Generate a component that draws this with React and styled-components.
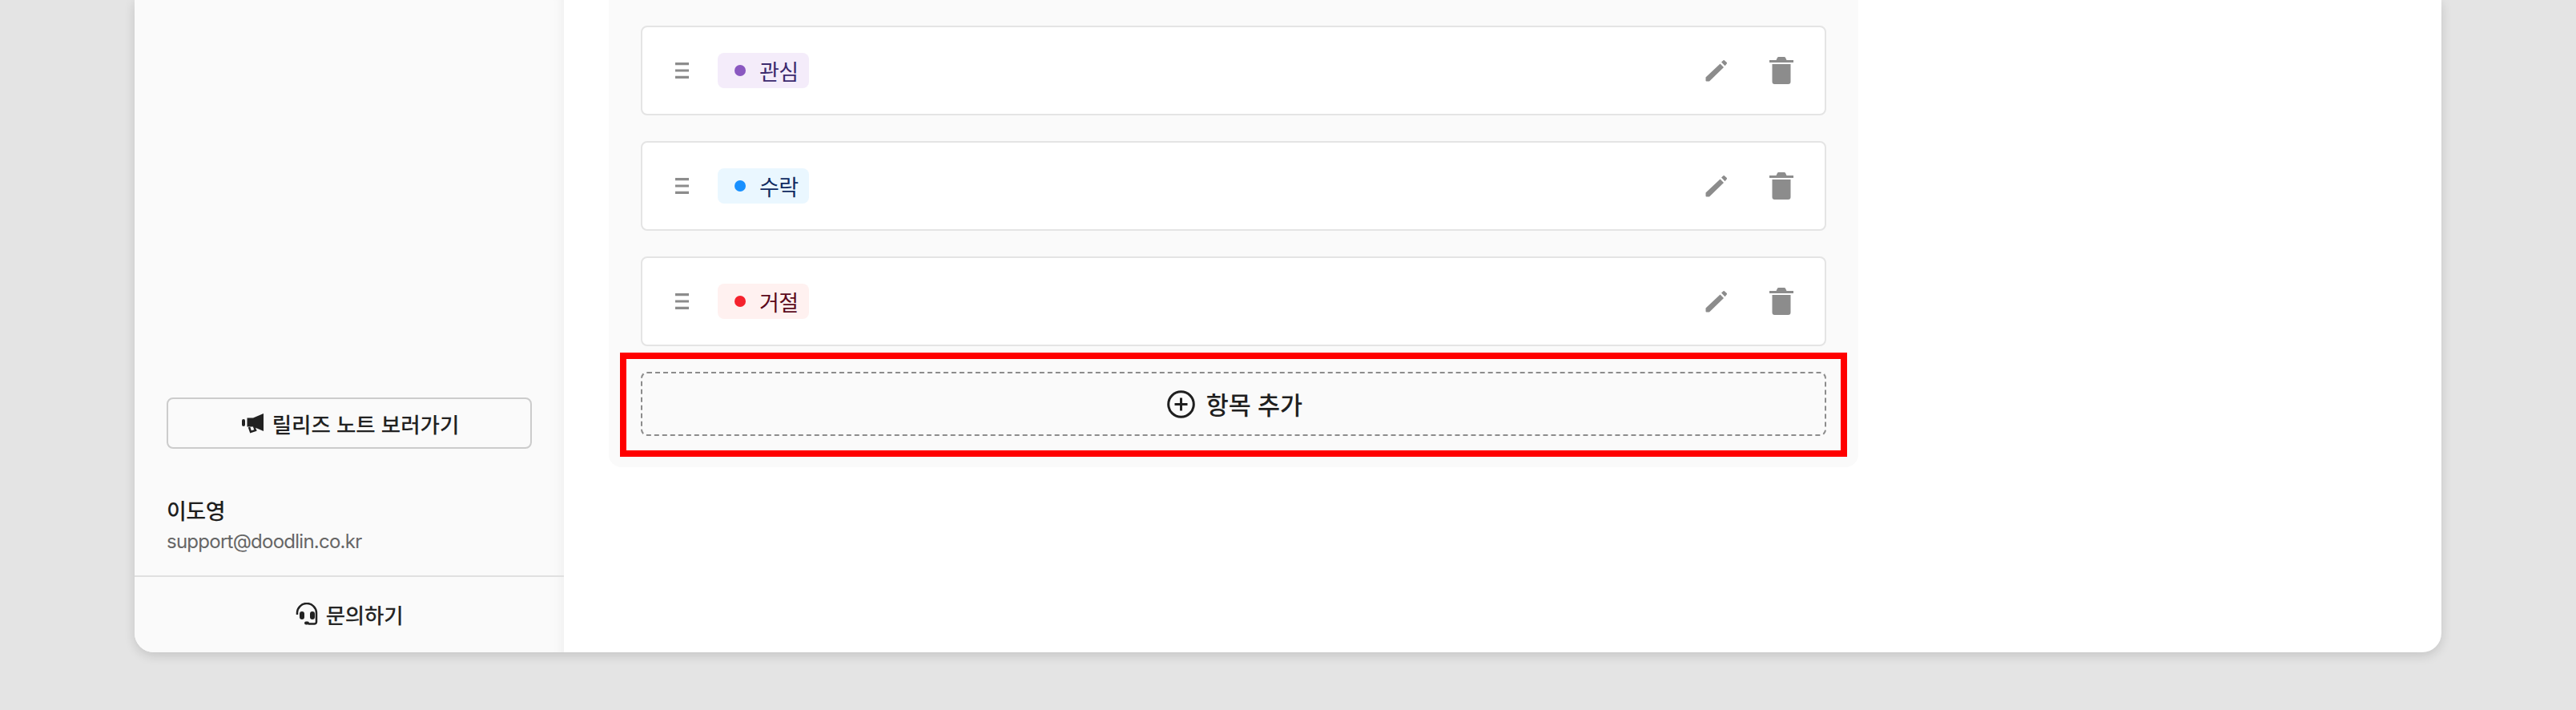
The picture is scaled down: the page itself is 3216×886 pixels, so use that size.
import React from 'react';
import styled, { createGlobalStyle } from 'styled-components';

const Global = createGlobalStyle`
  html, body { margin: 0; padding: 0; height: 886px; overflow: hidden; background: #e4e4e4; }
  body { font-family: Inter, "Noto Sans CJK KR", sans-serif; }
  * { box-sizing: border-box; }
`;

const Page = styled.div`
  height: 886px;
  padding: 0 168px 72px;
  display: flex;
`;
const Card = styled.div`
  flex: 1;
  display: flex;
  background: #fff;
  border-radius: 0 0 24px 24px;
  box-shadow: 0 4px 14px rgba(0,0,0,.14);
  overflow: hidden;
`;
const Sidebar = styled.aside`
  width: 536px;
  flex: none;
  background: #fafafa;
  display: flex;
  flex-direction: column;
  justify-content: flex-end;
  box-shadow: inset -14px 0 14px -12px rgba(0,0,0,.05);
`;
const SideTop = styled.div`
  padding: 0 40px 24px;
`;
const ReleaseButton = styled.button`
  width: 100%;
  height: 64px;
  background: transparent;
  border: 2px solid #ccc;
  border-radius: 8px;
  display: flex;
  align-items: center;
  justify-content: center;
  gap: 10px;
  font: 500 26.5px Inter, "Noto Sans CJK KR", sans-serif;
  color: #222;
  padding: 0 0 0 3px;
`;
const Name = styled.div`
  margin-top: 59px;
  font-weight: 500;
  font-size: 27px;
  letter-spacing: -0.5px;
  line-height: 39px;
  color: #1f1f1f;
`;
const Email = styled.div`
  font-size: 24px;
  letter-spacing: -0.75px;
  line-height: 36px;
  color: #666;
`;
const Inquiry = styled.div`
  height: 96px;
  border-top: 2px solid #e0e0e0;
  display: flex;
  align-items: center;
  justify-content: center;
  gap: 10px;
  padding-bottom: 2px;
  font-weight: 500;
  font-size: 26.5px;
  letter-spacing: -0.2px;
  color: #262626;
`;
const Main = styled.main`
  flex: 1;
  padding-left: 56px;
`;
const Panel = styled.section`
  width: 1560px;
  background: #fafafa;
  border-radius: 0 0 16px 16px;
  padding: 32px 40px 39px;
  display: flex;
  flex-direction: column;
  gap: 32px;
`;
const Item = styled.div`
  height: 112px;
  background: #fff;
  border: 2px solid #e4e4e4;
  border-radius: 8px;
  display: flex;
  align-items: center;
  padding: 0 39px 0 41px;
`;
const Handle = styled.svg`
  width: 18px;
  height: 20px;
  flex: none;
  margin-right: 35px;
`;
const Tag = styled.span`
  width: 114px;
  height: 44px;
  border-radius: 8px;
  background: ${p => p.$bg};
  color: ${p => p.$fg};
  display: flex;
  align-items: center;
  padding-left: 21px;
  gap: 17px;
  font-size: 27px;
  letter-spacing: -0.5px;
`;
const Dot = styled.i`
  width: 14px;
  height: 14px;
  border-radius: 50%;
  background: ${p => p.$c};
  flex: none;
`;
const Actions = styled.div`
  margin-left: auto;
  display: flex;
  align-items: center;
  gap: 52px;
`;
const AddWrap = styled.div`
  position: relative;
`;
const AddButton = styled.button`
  width: 100%;
  height: 80px;
  background: #fafafa;
  border: 2px dashed #8c8c8c;
  border-radius: 8px;
  display: flex;
  align-items: center;
  justify-content: center;
  gap: 14px;
  font: 500 30.5px Inter, "Noto Sans CJK KR", sans-serif;
  color: #1f1f1f;
  padding: 0 0 0 3px;
`;
const Highlight = styled.div`
  position: absolute;
  inset: -24px -26px -26px -26px;
  border: 8px solid #f00;
  pointer-events: none;
`;

const HandleIcon = () => (
  <Handle viewBox="0 0 18 20"><path fill="#8c8c8c" d="M0 0h17v3.200H0zM0 8.400h17v3.200H0zM0 16.800h17v3.200H0z"/></Handle>
);
const Pencil = () => (
  <svg width="28" height="28" viewBox="0 0 28 28" style={{ display: 'block' }}>
    <path fill="#8c8c8c" d="M0.500 22.500 18.500 5.500 23 10 5 27.500H1.500a1 1 0 0 1-1-1z"/>
    <path fill="#8c8c8c" d="M20 3.500 22.500 1.200a1 1 0 0 1 1.300 0l3 2.900a1 1 0 0 1 0 1.300L24.500 8.200z"/>
  </svg>
);
const Trash = () => (
  <svg width="30" height="34" viewBox="0 0 30 34" style={{ display: 'block' }}>
    <path fill="#8c8c8c" d="M0 4h8.500l1.300-2.800a2 2 0 0 1 1.700-1.200h7a2 2 0 0 1 1.700 1.200L21.500 4H30v3H0z"/>
    <path fill="#8c8c8c" d="M3.500 9h23v22a3 3 0 0 1-3 3h-17a3 3 0 0 1-3-3z"/>
  </svg>
);
const Megaphone = () => (
  <svg width="28" height="26" viewBox="0 0 28 26">
    <path fill="#222" d="M27 1v22L14 17.500H6.500V6.500H14z"/>
    <rect x="0" y="8" width="4" height="9" rx="2" fill="#222"/>
    <path fill="none" stroke="#222" strokeWidth="2.500" d="M9 18l2 6 6-2-2-5"/>
  </svg>
);
const Headset = () => (
  <svg width="28" height="28" viewBox="0 0 28 28" fill="none">
    <path stroke="#222" strokeWidth="2.500" d="M2 15v-2a12 12 0 0 1 24 0v11a2.500 2.500 0 0 1-2.500 2.500H16"/>
    <rect x="5" y="11" width="6" height="10" rx="3" fill="#222"/>
    <rect x="18" y="11" width="6" height="10" rx="3" fill="#222"/>
    <rect x="11" y="23.500" width="6" height="4" rx="2" fill="#222"/>
  </svg>
);
const PlusCircle = () => (
  <svg width="35" height="35" viewBox="0 0 35 35" fill="none" stroke="#1f1f1f" strokeWidth="3">
    <circle cx="17.500" cy="17.500" r="15.800"/>
    <path d="M17.500 9.500v16M9.500 17.500h16"/>
  </svg>
);

const items = [
  { label: '관심', bg: '#f4ecfa', fg: '#3c2a6e', dot: '#8a58c0' },
  { label: '수락', bg: '#eaf7ff', fg: '#0f2a60', dot: '#1890ff' },
  { label: '거절', bg: '#fff1f0', fg: '#5c0a1c', dot: '#f5222d' },
];

export default function App() {
  return (
    <Page>
      <Global />
      <Card>
        <Sidebar>
          <SideTop>
            <ReleaseButton><Megaphone />릴리즈 노트 보러가기</ReleaseButton>
            <Name>이도영</Name>
            <Email>support@doodlin.co.kr</Email>
          </SideTop>
          <Inquiry><Headset />문의하기</Inquiry>
        </Sidebar>
        <Main>
          <Panel>
            {items.map(it => (
              <Item key={it.label}>
                <HandleIcon />
                <Tag $bg={it.bg} $fg={it.fg}><Dot $c={it.dot} />{it.label}</Tag>
                <Actions><Pencil /><Trash /></Actions>
              </Item>
            ))}
            <AddWrap>
              <AddButton><PlusCircle />항목 추가</AddButton>
              <Highlight />
            </AddWrap>
          </Panel>
        </Main>
      </Card>
    </Page>
  );
}
